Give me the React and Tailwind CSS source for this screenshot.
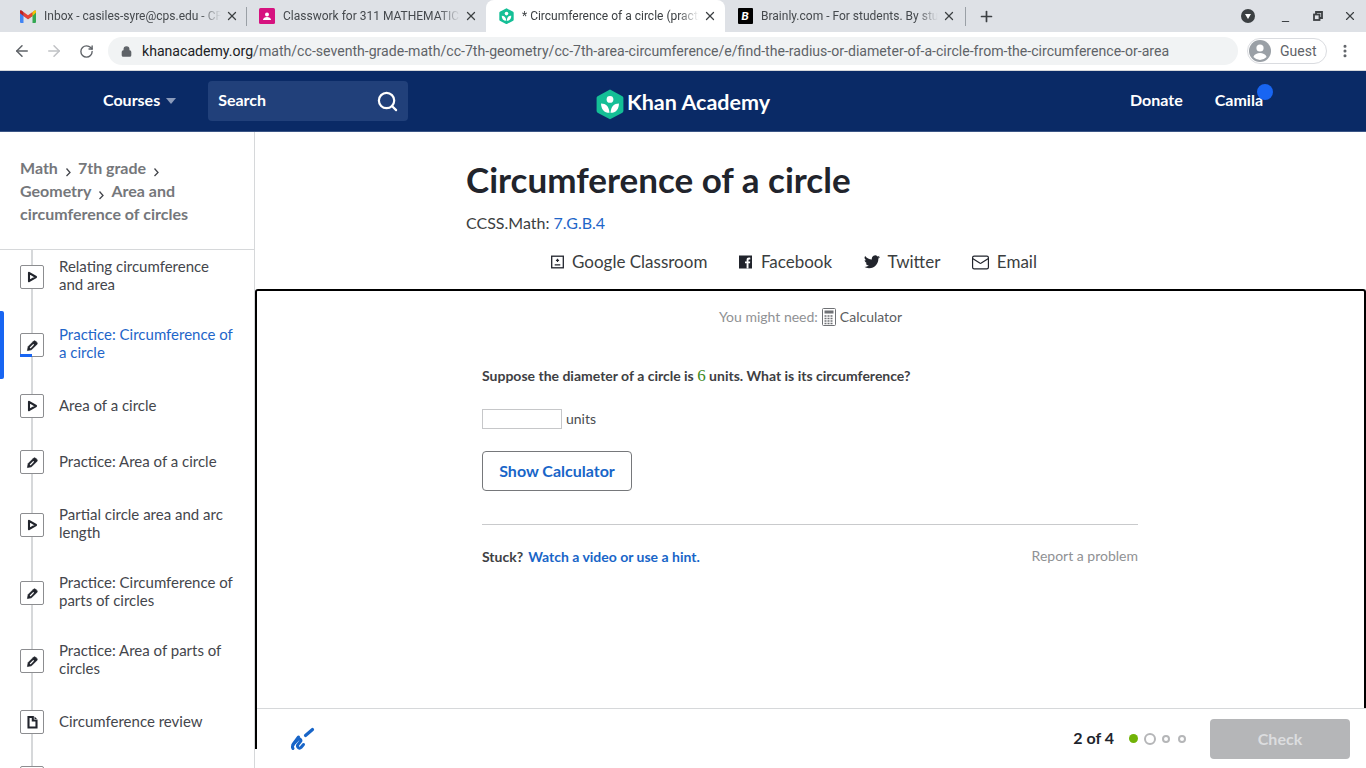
import React from "react";
import { Lock, ArrowLeft, ArrowRight, RotateCw, Plus, X, Minus, EllipsisVertical, Search, Mail } from "lucide-react";

const lato = { fontFamily: "Lato, sans-serif" };

function Tab({ icon, title, active, sep, w, pr = "pr-[8px]" }) {
  return (
    <div className={`relative h-[32px] flex items-center ${w} pl-[12px] ${pr} ${active ? "bg-white rounded-t-[8px]" : ""}`}>
      <span className="w-[16px] h-[16px] flex items-center justify-center shrink-0">{icon}</span>
      <span className={`ml-[8px] flex-1 overflow-hidden whitespace-nowrap text-[12px] ${active ? "text-[#3c4043]" : "text-[#45494d]"}`}
        style={{ maskImage: "linear-gradient(to right, black 88%, transparent)" }}>{title}</span>
      <X size={14} strokeWidth={2.2} className="text-[#3c4043] ml-[4px] shrink-0" />
      {sep && <span className="absolute right-0 top-[7px] h-[19px] w-px bg-[#9aa0a6]" />}
    </div>
  );
}

const Gmail = () => (
  <svg width="16" height="13" viewBox="0 0 16 13">
    <path d="M0 2.5V12a1 1 0 0 0 1 1h2.5V6L8 9.2V6.5L1.6.8A1 1 0 0 0 0 2.5z" fill="#4285f4" />
    <path d="M16 2.5V12a1 1 0 0 1-1 1h-2.5V6L8 9.2V6.5L14.4.8A1 1 0 0 1 16 2.5z" fill="#34a853" />
    <path d="M3.5 6V1.9L8 5.3l4.5-3.4V6L8 9.3z" fill="#ea4335" />
    <path d="M12.5 6V1.9l1.6-1.2A1.1 1.1 0 0 1 16 1.7v.9z" fill="#fbbc04" />
    <path d="M0 1.8A1.1 1.1 0 0 1 1.9.7l1.6 1.2V6L0 3.2z" fill="#c5221f" />
  </svg>
);
const Classroom = () => (
  <svg width="16" height="16" viewBox="0 0 16 16">
    <rect width="16" height="16" rx="1.5" fill="#d6127f" />
    <circle cx="8" cy="6.4" r="2" fill="#fff" />
    <path d="M4 12c0-2 2-3 4-3s4 1 4 3z" fill="#fff" />
  </svg>
);
const KhanHex = ({ size = 16, bg = "#14bf96" }) => (
  <svg width={size} height={size * 1.1} viewBox="0 0 28 31">
    <path d="M14 0.5L26.5 7.2a2 2 0 0 1 1 1.8v13a2 2 0 0 1-1 1.8L14 30.5 1.5 23.8a2 2 0 0 1-1-1.8V9a2 2 0 0 1 1-1.8z" fill={bg} />
    <circle cx="14" cy="10.5" r="3.4" fill="#fff" />
    <path d="M5 14.5c5 0 8 3 8.5 9.5C8 24 5 20 5 14.5z" fill="#fff" />
    <path d="M23 14.5c-5 0-8 3-8.5 9.5C20 24 23 20 23 14.5z" fill="#fff" />
  </svg>
);
const Brainly = () => (
  <div className="w-[15px] h-[16px] bg-black text-white text-[12px] font-black italic flex items-center justify-center rounded-[1px]" style={lato}>B</div>
);

function Play() {
  return <svg width="12" height="12" viewBox="0 0 12 12"><path d="M3 1.8L10 6l-7 4.2z" fill="none" stroke="#21242c" strokeWidth="2.1" strokeLinejoin="round" /></svg>;
}
function Pencil() {
  return (
    <svg width="13" height="13" viewBox="0 0 12 12">
      <path d="M1.3 10.7L2 7 7 2a1.3 1.3 0 0 1 1.8 0L10 3.2a1.3 1.3 0 0 1 0 1.8L5 10z" fill="#21242c" stroke="#21242c" strokeWidth="0.6" strokeLinejoin="round" />
      <path d="M3.4 7.9L6.7 4.6 7.5 5.4 4.2 8.7z" fill="#fff" />
    </svg>
  );
}
function Doc() {
  return <svg width="12" height="14" viewBox="0 0 12 14"><path d="M2.5 2H6.8V5.5H10.5V12.5H2.5z" fill="none" stroke="#21242c" strokeWidth="2.1" /><path d="M8.5 1.5L11 4H8.5z" fill="#21242c" /></svg>;
}

function Item({ kind, title, active, h, one }) {
  const Icon = kind === "play" ? Play : kind === "doc" ? Doc : Pencil;
  return (
    <div className={`relative flex items-center pl-[20px] pr-[20px] ${h}`}>
      {active && <span className="absolute left-0 top-0 h-[68px] w-[4px] rounded-r-[2px] bg-[#1865f2]" />}
      <span className={`relative z-10 w-[24px] h-[24px] shrink-0 bg-white border border-[#8c8d90] rounded-[2px] flex items-center justify-center ${one ? "mb-[2px]" : ""}`}>
        <Icon />
        {active && <span className="absolute left-[-1px] bottom-[-1px] w-[12px] h-[3px] bg-[#1865f2]" />}
      </span>
      <span className={`ml-[15px] mb-[4px] text-[15px] leading-[18px] ${active ? "text-[#1f66c9]" : "text-[#44464c]"}`}>{title}</span>
    </div>
  );
}

const Crumb = () => (
  <svg className="inline-block ml-[7px] mr-[6px] align-[-3px]" width="7" height="10" viewBox="0 0 7 10"><path d="M1.5 1.5L5 5.5 1.5 9" fill="none" stroke="#44464c" strokeWidth="1.3" /></svg>
);

function Share({ icon, label }) {
  return <div className="flex items-center gap-[8px]">{icon}<span>{label}</span></div>;
}

export default function App() {
  return (
    <div className="w-[1366px] h-[768px] overflow-hidden bg-white relative flex flex-col" style={{ fontFamily: "Roboto, sans-serif" }}>
      {/* tab strip */}
      <div className="h-[32px] bg-[#dee1e6] flex items-center pl-[8px] shrink-0">
        <Tab w="w-[239px]" icon={<Gmail />} title="Inbox - casiles-syre@cps.edu - CPS Mail" sep />
        <Tab w="w-[239px]" icon={<Classroom />} title="Classwork for 311 MATHEMATICS 7" />
        <Tab w="w-[239px]" active icon={<KhanHex size={15} />} title="* Circumference of a circle (practice)" />
        <Tab w="w-[241px]" pr="pr-[10px]" icon={<Brainly />} title="Brainly.com - For students. By students." sep />
        <Plus size={17} strokeWidth={2.4} className="ml-[12px] text-[#3c4043]" />
        <div className="ml-auto flex items-center pr-[9px] text-[#3c4043]">
          <span className="w-[14px] h-[14px] rounded-full bg-[#3c4043] flex items-center justify-center mr-[25px]">
            <span className="w-0 h-0 border-x-[3.5px] border-x-transparent border-t-[5px] border-t-white" />
          </span>
          <Minus size={11} strokeWidth={2.4} className="mr-[22px] mt-[10px]" />
          <svg className="mr-[20px]" width="10" height="10" viewBox="0 0 10 10">
            <path d="M3 3V1H9V7H7" fill="none" stroke="#3c4043" strokeWidth="1.8" />
            <rect x="1" y="3.5" width="5.5" height="5.5" fill="none" stroke="#3c4043" strokeWidth="1.8" />
          </svg>
          <X size={14} strokeWidth={2} />
        </div>
      </div>
      {/* toolbar */}
      <div className="h-[39px] bg-white flex items-center shrink-0 border-b border-[#d5d7da]">
        <ArrowLeft size={18} strokeWidth={2} className="ml-[13px] text-[#5f6368]" />
        <ArrowRight size={18} strokeWidth={2} className="ml-[14px] text-[#c0c2c5]" />
        <RotateCw size={15} strokeWidth={2.2} className="ml-[16px] text-[#5f6368]" />
        <div className="ml-[14px] w-[1130px] h-[28px] rounded-full bg-[#f1f3f4] flex items-center pl-[13px] text-[14.1px] whitespace-nowrap">
          <Lock size={11} strokeWidth={3} className="text-[#5f6368]" fill="#5f6368" />
          <span className="ml-[10px] mt-[1px] text-[#202124]">khanacademy.org</span>
          <span className="mt-[1px] text-[#5f6368]">/math/cc-seventh-grade-math/cc-7th-geometry/cc-7th-area-circumference/e/find-the-radius-or-diameter-of-a-circle-from-the-circumference-or-area</span>
        </div>
        <div className="ml-[9px] w-[80px] h-[26px] rounded-full border border-[#dadce0] flex items-center pl-[1px] text-[14px] text-[#5f6368]">
          <svg width="22" height="22" viewBox="0 0 22 22"><circle cx="11" cy="11" r="11" fill="#9aa0a6" /><circle cx="11" cy="8" r="3.6" fill="#fff" /><path d="M4.4 17c1-3 4-4 6.6-4s5.6 1 6.6 4a9 9 0 0 1-13.2 0z" fill="#fff" /></svg>
          <span className="ml-[9px]">Guest</span>
        </div>
        <EllipsisVertical size={16} strokeWidth={2.6} className="ml-[10px] text-[#5f6368]" />
      </div>
      {/* site */}
      <div className="flex-1 flex flex-col min-h-0 relative" style={lato}>
        <header className="h-[61px] shrink-0 bg-[#0a2a66] border-b border-[#3b5585] flex items-center relative text-white text-[16px] font-bold">
          <div className="ml-[103px] flex items-center">
            <span className="mb-[2px]">Courses</span>
            <span className="ml-[6px] w-0 h-0 border-x-[5px] border-x-transparent border-t-[6px] border-t-[#8b9bbb]" />
          </div>
          <div className="ml-[32px] w-[200px] h-[40px] rounded-[4px] bg-[#21407a] flex items-center justify-between pl-[10px] pr-[9px]">
            <span className="mb-[2px]">Search</span>
            <Search size={23} strokeWidth={2.3} />
          </div>
          <div className="absolute left-[596px] top-[15px] flex items-center">
            <KhanHex size={28} />
            <span className="ml-[3px] mb-[4px] text-[21.5px] font-bold">Khan Academy</span>
          </div>
          <div className="ml-auto flex items-center pr-[103px] relative mb-[2px]">
            <span className="mr-[32px]">Donate</span>
            <span>Camila</span>
            <span className="absolute right-[93px] top-[-4px] w-[16px] h-[16px] rounded-full bg-[#1865f2]" />
          </div>
        </header>
        <div className="flex-1 flex min-h-0">
          <aside className="w-[255px] shrink-0 border-r border-[#d6d8da] flex flex-col min-h-0">
            <div className="h-[118px] shrink-0 border-b border-[#d6d8da] pl-[20px] pr-[20px] pt-[24px] text-[16px] leading-[23px] font-bold text-[#75777b]">
              Math<Crumb />7th grade<Crumb />
              <br />Geometry<Crumb />Area and
              <br />circumference of circles
            </div>
            <div className="flex-1 overflow-hidden relative">
              <span className="absolute left-[31px] top-0 bottom-0 w-[2px] bg-[#d6d8da]" />
              <div className="mt-[-7px]">
                <Item kind="play" title={<>Relating circumference<br />and area</>} h="h-[68px]" />
                <Item kind="pencil" active title={<>Practice: Circumference of<br />a circle</>} h="h-[68px]" />
                <Item kind="play" one title="Area of a circle" h="h-[56px]" />
                <Item kind="pencil" one title="Practice: Area of a circle" h="h-[56px]" />
                <Item kind="play" title={<>Partial circle area and arc<br />length</>} h="h-[68px]" />
                <Item kind="pencil" title={<>Practice: Circumference of<br />parts of circles</>} h="h-[68px]" />
                <Item kind="pencil" title={<>Practice: Area of parts of<br />circles</>} h="h-[68px]" />
                <Item kind="doc" one title="Circumference review" h="h-[56px]" />
                <Item kind="doc" one title="" h="h-[56px]" />
              </div>
            </div>
          </aside>
          <main className="flex-1 min-w-0 relative flex flex-col">
            <div className="h-[157px] shrink-0 pl-[211px]">
              <h1 className="pt-[23px] text-[35px] leading-[48px] font-bold text-[#21242c]">Circumference of a circle</h1>
              <div className="mt-[10px] text-[16px] leading-[20px] text-[#3b3e40]">CCSS.Math: <span className="text-[#1f66c9]">7.G.B.4</span></div>
            </div>
            <div className="absolute left-[296px] top-[118px] flex gap-[31.5px] text-[17px] leading-[24px] text-[#3b3e40]">
              <Share label="Google Classroom" icon={
                <svg width="13" height="14" viewBox="0 0 14 14"><rect x="0.75" y="0.75" width="12.5" height="12.5" fill="none" stroke="#21242c" strokeWidth="1.4" /><path d="M7 3.5v3.5M5.3 5.2h3.4M4 10h6" stroke="#21242c" strokeWidth="1.3" /></svg>} />
              <Share label="Facebook" icon={
                <svg width="14" height="14" viewBox="0 0 14 14"><rect width="13" height="13" y="0.5" fill="#21242c" /><path d="M9.5 13.5V8.3h1.5l.2-1.9H9.5V5.3c0-.6.2-.9.9-.9h.9V2.7c-.3 0-.8-.1-1.4-.1-1.4 0-2.3.8-2.3 2.4v1.4H6v1.9h1.6v5.2z" fill="#fff" /></svg>} />
              <Share label="Twitter" icon={
                <svg width="16" height="14" viewBox="0 0 24 20"><path d="M24 2.4c-.9.4-1.8.7-2.8.8 1-.6 1.8-1.6 2.2-2.7-1 .6-2 1-3.1 1.2A4.9 4.9 0 0 0 11.9 6.2C7.8 6 4.2 4 1.7.9a4.9 4.9 0 0 0 1.5 6.6c-.8 0-1.6-.2-2.2-.6v.1c0 2.4 1.7 4.4 3.9 4.8-.7.2-1.5.2-2.2.1.6 2 2.4 3.4 4.6 3.4A9.9 9.9 0 0 1 0 17.3 13.9 13.9 0 0 0 7.5 19.5c9.1 0 14-7.5 14-14v-.6c1-.7 1.8-1.6 2.5-2.5z" fill="#21242c" /></svg>} />
              <Share label="Email" icon={<Mail size={19} strokeWidth={1.5} className="-ml-[1px] -mr-[1px] text-[#21242c]" />} />
            </div>
            {/* exercise frame */}
            <div className="h-[460px] shrink-0 border-2 border-b-0 border-black rounded-t-[3px] relative">
              <div className="pt-[16px] text-center text-[14px] leading-[20px] text-[#8f9194] flex items-center justify-center">
                You might need:
                <svg className="mx-[4px]" width="14" height="18" viewBox="0 0 14 18"><rect x="0.5" y="0.5" width="13" height="17" rx="1" fill="#fff" stroke="#6f7175" /><rect x="2.5" y="2.5" width="9" height="3" fill="#6f7175" /><path d="M2.5 8h9M2.5 10.5h9M2.5 13h9M2.5 15.5h9" stroke="#6f7175" strokeWidth="1.4" strokeDasharray="2 1" /></svg>
                <span className="text-[#5b5d61]">Calculator</span>
              </div>
              <div className="ml-[225px] w-[656px]">
                <p className="mt-[38px] text-[14px] leading-[22px] font-bold text-[#3e4043] whitespace-nowrap">
                  Suppose the diameter of a circle is <span className="text-[17px] font-normal text-[#3d8b1f]" style={{ fontFamily: "'Liberation Serif', serif" }}>6</span> units. What is its circumference?
                </p>
                <div className="mt-[21px] flex items-center text-[14px] text-[#4a4c50]">
                  <span className="w-[80px] h-[20px] border border-[#c6c7c9] bg-white" />
                  <span className="ml-[4px]">units</span>
                </div>
                <button className="mt-[22px] w-[150px] h-[40px] rounded-[4px] border border-[#76787b] bg-white text-[16px] font-bold text-[#1865c8]">Show Calculator</button>
                <div className="mt-[33px] border-t border-[#c9cacc] pt-[20px] flex items-center justify-between text-[14px]">
                  <div className="font-bold text-[#3e4043]">Stuck?<span className="ml-[5px] text-[#1865c8]">Watch a video or use a hint.</span></div>
                  <span className="mb-[2px] text-[#8f9194]">Report a problem</span>
                </div>
              </div>
            </div>
            {/* footer */}
            <div className="absolute left-[2px] right-0 bottom-0 h-[60px] bg-white border-t border-[#d6d8da] flex items-center pr-[16px]">
              <svg className="ml-[32px]" width="26" height="26" viewBox="0 0 26 26">
                <path d="M4 22.5C2.5 20.5 4 18.5 6 16.5L9 13.5C10.5 12 13 14 11.5 15.5L9 18.5C7.500 20.500 10 23.500 12 21.500L14.500 18.500" fill="none" stroke="#1865c8" strokeWidth="3" strokeLinecap="round" strokeLinejoin="round" />
                <path d="M4 18.500L9.500 11" fill="none" stroke="#1865c8" strokeWidth="3" strokeLinecap="round" />
                <path d="M16.500 9.500L23.500 3.500" stroke="#1865c8" strokeWidth="3.200" strokeLinecap="round" />
              </svg>
              <span className="ml-auto mb-[2px] text-[16px] font-bold text-[#21242c]">2 of 4</span>
              <span className="ml-[15px] w-[9px] h-[9px] rounded-full bg-[#71b307]" />
              <span className="ml-[6px] w-[12px] h-[12px] rounded-full border-2 border-[#b5b6b8]" />
              <span className="ml-[6px] w-[8px] h-[8px] rounded-full border-2 border-[#b5b6b8]" />
              <span className="ml-[8px] w-[8px] h-[8px] rounded-full border-2 border-[#b5b6b8]" />
              <button className="ml-[24px] w-[140px] h-[40px] rounded-[4px] bg-[#b5b6b8] text-[16px] font-bold text-[#dcdddf]">Check</button>
            </div>
          </main>
        </div>
      </div>
    </div>
  );
}
